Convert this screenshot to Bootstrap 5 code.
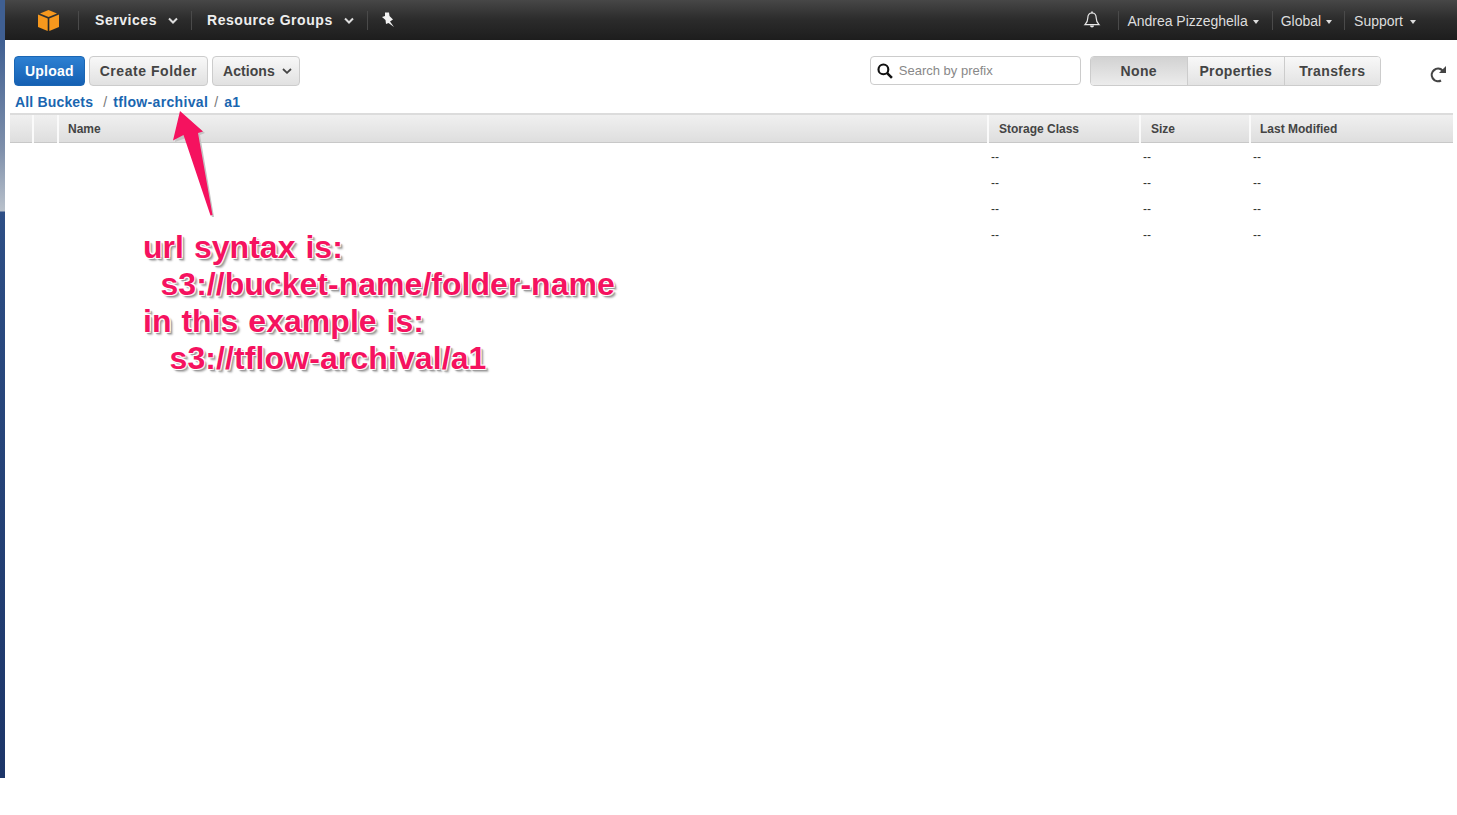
<!DOCTYPE html>
<html lang="en">
<head>
<meta charset="utf-8">
<title>S3 console</title>
<link href="https://cdn.jsdelivr.net/npm/bootstrap@5.3.0/dist/css/bootstrap.min.css" rel="stylesheet">
<style>
html,body{height:100%;}
body{background:#fff;font-family:"Liberation Sans",Arial,sans-serif;color:#333;position:relative;overflow:hidden;}
.win-edge{width:5px;height:778px;flex:none;background:linear-gradient(180deg,#3f5f92 0,#3f5f92 40px,#7f90ab 150px,#b9c1cb 211px,#2e4f86 212px,#2a4a80 300px,#1c3568 100%);}
.app{flex:1 1 auto;min-width:0;height:778px;}
.topbar{height:40px;background:linear-gradient(180deg,#474747 0,#2b2b2b 50%,#1d1d1d 100%);color:#fff;font-size:14px;}
.logo-cell{width:73px;padding-left:33px;}
.top-sep{width:1px;height:19px;background:#4a4a4a;flex:none;}
.top-main{font-weight:700;color:#eee;letter-spacing:.55px;}
.top-a{padding-left:16px;width:112px;}
.top-b{padding-left:15px;width:175px;}
.top-pin{padding-left:13px;}
.top-chev{margin-left:auto;margin-right:13px;}
.top-right{font-size:14px;color:#ddd;letter-spacing:-.02px;}
.bell-ico{margin-right:17px;}
.top-lnk{padding-left:8px;padding-right:13px;white-space:nowrap;margin-top:2px;}
.top-lnk-mid{padding-right:12px;}
.top-lnk-last{padding-left:9px;padding-right:41px;}
.tcar{display:inline-block;width:0;height:0;border-left:3.5px solid transparent;border-right:3.5px solid transparent;border-top:4px solid #ddd;margin-left:5px;vertical-align:2px;}
.top-lnk-last .tcar{margin-left:7px;}
.tool-row{height:46px;padding-left:9px;padding-top:16px;}
.aws-btn{height:30px;font-size:14px;font-weight:700;letter-spacing:.2px;color:#444;border:1px solid #ccc;border-radius:4px;background:linear-gradient(180deg,#f8f8f8,#e1e1e1);padding:0 10px;line-height:28px;display:inline-flex;align-items:center;white-space:nowrap;}
.aws-btn:hover{color:#444;border-color:#ccc;}
.aws-pri{color:#fff;background:linear-gradient(180deg,#2d80d2,#1560b3);border-color:#1a66b4;}
.aws-pri:hover{color:#fff;background:#1560b3;}
.aws-wide{letter-spacing:.55px;}
.aws-tight{letter-spacing:.05px;}
.btn-chev{margin-left:7px;margin-right:-3px;}
.search-box{width:211px;height:29px;border:1px solid #ccc;border-radius:4px;margin-left:566px;padding-left:6px;background:#fff;}
.search-box input{border:0;outline:0;font-size:13px;padding:1px 0 0;margin-left:6px;width:170px;font-family:inherit;background:transparent;}
.search-box input::placeholder{color:#888;opacity:1;}
.seg-group{margin-left:5px;border:1px solid #ccc;border-radius:4px;height:30px;overflow:hidden;}
.seg-item{height:28px;line-height:28px;font-size:14px;font-weight:700;letter-spacing:.35px;color:#444;text-align:center;background:linear-gradient(180deg,#f8f8f8,#e3e3e3);border-left:1px solid #ccc;}
.seg-item:first-child{width:96px;border-left:0;background:linear-gradient(180deg,#d2d2d2,#ececec);}
.seg-prop{width:97px;}
.seg-tran{width:96px;}
.refresh-cell{margin-left:43px;padding-top:5px;}
.crumbs{height:27px;padding-left:10px;font-size:14px;font-weight:700;letter-spacing:.17px;line-height:33px;white-space:nowrap;}
.crumbs a{color:#1a66b0;text-decoration:none;}
.crumbs i{font-style:normal;font-weight:400;color:#777;margin:0 6px;}
.crumbs i.crumb-first{margin-left:10px;}
.crumbs a.crumb-mid{letter-spacing:.34px;}
.file-wrap{padding-left:5px;width:1448px;}
.file-table{table-layout:fixed;width:1443px;margin:0;font-size:12px;--bs-table-bg:transparent;}
.file-table th{height:28px;padding:2px 9px 0;font-weight:700;color:#444;background:linear-gradient(180deg,#f0f0f0,#dedede);border-top:2px solid #dcdcdc;border-bottom:1px solid #c8c8c8;border-left:2px solid #fafafa;vertical-align:middle;}
.file-table th:first-child{border-left:0;}
.file-table th.w-s,.file-table th.w-z{padding-left:10px;}
.file-table td{height:26px;padding:4px 0 0 3px;color:#333;border:0;vertical-align:middle;font-size:12px;}
.w-a{width:23px}.w-b{width:25px}.w-s{width:152px}.w-z{width:110px}.w-m{width:203px}
.note-arrow{position:absolute;left:0;top:0;pointer-events:none;}
.note-text{position:absolute;left:143px;top:229px;margin:0;font-size:32px;line-height:37px;font-weight:700;color:#f5125f;white-space:nowrap;font-family:"Liberation Sans",Arial,sans-serif;letter-spacing:.03px;word-spacing:1px;text-shadow:-1px -1px 0 #fff,1px -1px 0 #fff,-1px 1px 0 #fff,1px 1px 0 #eee,2px 2px 1px #999,3px 3px 2px #bbb;}
.note-line{display:block;}
.note-in-a{margin-left:17.5px;}
.note-in-b{margin-left:26.5px;letter-spacing:.1px;}
</style>
</head>
<body>
<div class="d-flex">
  <div class="win-edge"></div>
  <div class="app">
    <nav class="topbar d-flex align-items-center">
      <div class="logo-cell d-flex align-items-center">
        <svg width="21" height="21" viewBox="0 0 21 21"><path fill="#f7981d" d="M10.5 0 19 3.4 10.5 6.9 2 3.4Z"/><path fill="#f7981d" d="M0 4.6 9.7 8.5V21L0 17Z"/><path fill="#f7981d" d="M21 4.6 11.3 8.5V21L21 17Z"/></svg>
      </div>
      <span class="top-sep"></span>
      <div class="top-a top-main d-flex align-items-center">Services<svg class="top-chev" width="10" height="7" viewBox="0 0 10 7"><path d="M1 1.5 5 5.5 9 1.5" fill="none" stroke="#ddd" stroke-width="2"/></svg></div>
      <span class="top-sep"></span>
      <div class="top-b top-main d-flex align-items-center">Resource Groups<svg class="top-chev" width="10" height="7" viewBox="0 0 10 7"><path d="M1 1.5 5 5.5 9 1.5" fill="none" stroke="#ddd" stroke-width="2"/></svg></div>
      <span class="top-sep"></span>
      <div class="top-pin d-flex align-items-center"><svg width="14" height="16" viewBox="0 0 14 16"><path fill="#f2f2f2" d="M4 .5 8 .5 8.5 4 12 7.5 9 9.5 13 15 7.5 11 5 12 4.5 8 1 5 4 4Z"/></svg></div>
      <div class="ms-auto d-flex align-items-center top-right">
        <svg class="bell-ico" width="18" height="18" viewBox="0 0 18 18"><path fill="none" stroke="#e8e8e8" stroke-width="1.2" d="M9 2C6 2 4.8 4.2 4.8 7 4.8 10.5 3.6 12 2 13.6H16C14.4 12 13.2 10.5 13.2 7 13.2 4.2 12 2 9 2Z"/><path fill="#e8e8e8" d="M7 14.5H11C11 17 7 17 7 14.5ZM8.2 0.6H9.8V2.2H8.2Z"/></svg>
        <span class="top-sep"></span>
        <span class="top-lnk">Andrea Pizzeghella<span class="tcar"></span></span>
        <span class="top-sep"></span>
        <span class="top-lnk top-lnk-mid">Global<span class="tcar"></span></span>
        <span class="top-sep"></span>
        <span class="top-lnk top-lnk-last">Support<span class="tcar"></span></span>
      </div>
    </nav>
    <div class="tool-row d-flex align-items-start gap-1">
      <a class="btn aws-btn aws-pri" href="#">Upload</a>
      <a class="btn aws-btn aws-wide" href="#">Create Folder</a>
      <a class="btn aws-btn aws-tight" href="#">Actions<svg class="btn-chev" width="10" height="6" viewBox="0 0 10 6"><path d="M1 1 5 4.8 9 1" fill="none" stroke="#444" stroke-width="1.8"/></svg></a>
      <div class="search-box d-flex align-items-center">
        <svg width="16" height="16" viewBox="0 0 15 15"><circle cx="6" cy="6" r="4.6" fill="none" stroke="#111" stroke-width="2"/><path d="M9.5 9.5 14 14" stroke="#111" stroke-width="2.4"/></svg>
        <input type="text" placeholder="Search by prefix">
      </div>
      <div class="seg-group d-flex">
        <div class="seg-item">None</div>
        <div class="seg-item seg-prop">Properties</div>
        <div class="seg-item seg-tran">Transfers</div>
      </div>
      <div class="refresh-cell">
        <svg width="20" height="20" viewBox="0 0 20 20"><path d="M14.5 6.5A6.3 6.3 0 1 0 13 16.5" fill="none" stroke="#444" stroke-width="2.2"/><path fill="#444" d="M18 2V9H11Z"/></svg>
      </div>
    </div>
    <div class="crumbs"><a href="#">All Buckets</a><i class="crumb-first">/</i><a class="crumb-mid" href="#">tflow-archival</a><i>/</i><a href="#">a1</a></div>
    <div class="file-wrap">
      <table class="table file-table">
        <thead>
          <tr><th class="w-a"></th><th class="w-b"></th><th>Name</th><th class="w-s">Storage Class</th><th class="w-z">Size</th><th class="w-m">Last Modified</th></tr>
        </thead>
        <tbody>
          <tr><td></td><td></td><td></td><td>--</td><td>--</td><td>--</td></tr>
          <tr><td></td><td></td><td></td><td>--</td><td>--</td><td>--</td></tr>
          <tr><td></td><td></td><td></td><td>--</td><td>--</td><td>--</td></tr>
          <tr><td></td><td></td><td></td><td>--</td><td>--</td><td>--</td></tr>
        </tbody>
      </table>
    </div>
  </div>
</div>
<svg class="note-arrow" width="240" height="230" viewBox="0 0 240 230"><path fill="#c4c4c4" d="M181 113 205 133 200 135 214 217 212 217 186 138 175 142Z"/><path fill="#f5125f" d="M180 111 203 131.500 198 133 212.500 215 210.500 215.500 183.500 135 173 140.500Z"/></svg>
<p class="note-text"><span class="note-line">url syntax is:</span><span class="note-line note-in-a">s3://bucket-name/folder-name</span><span class="note-line">in this example is:</span><span class="note-line note-in-b">s3://tflow-archival/a1</span></p>
</body>
</html>
